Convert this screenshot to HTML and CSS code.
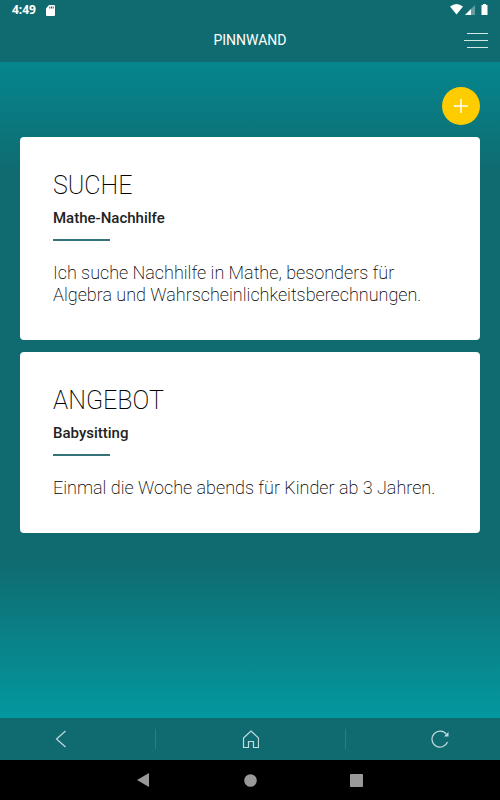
FILE: index.html
```html
<!DOCTYPE html>
<html lang="de">
<head>
<meta charset="utf-8">
<meta name="viewport" content="width=device-width, initial-scale=1">
<title>Pinnwand</title>
<link rel="stylesheet" href="styles.css">
</head>
<body>
<div class="app">
  <div class="status">
    <span class="time">4:49</span>
    <svg class="sd" width="10" height="11" viewBox="0 0 10 11"><path fill="#fff" fill-rule="evenodd" d="M3 0h5q1 0 1 1v9q0 1-1 1H1q-1 0-1-1V3.500zM3.300 1.500v2h1v-2zM5 1.500v2h1v-2zM6.700 1.500v2h1v-2z"/></svg>
    <svg class="signals" width="38" height="12" viewBox="0 0 38 12"><path fill="#fff" d="M0 2.500Q6.500-2.500 13 2.500L6.500 10.500z"/><path fill="#fff" opacity=".35" d="M25 1v10H15z"/><path fill="#fff" d="M21 5v6h-6z"/><path fill="#fff" d="M33 0h3v1h1.500v10h-6V1H33z"/></svg>
  </div>
  <header class="header">
    <h1 class="title">PINNWAND</h1>
    <button class="menu" type="button" aria-label="Menü">
      <svg width="24" height="16" viewBox="0 0 24 16" stroke="#d5e6e7" stroke-width="1"><path d="M3 1.500h21M0 8.500h24M3 15.500h21"/></svg>
    </button>
  </header>
  <main class="board">
    <button class="add" type="button" aria-label="Neuer Eintrag">
      <svg width="14" height="14" viewBox="0 0 14 14" stroke="#fff" stroke-width="1.500"><path d="M7 0v14M0 7h14"/></svg>
    </button>
    <article class="card">
      <h2 class="kind">SUCHE</h2>
      <h3 class="subject">Mathe-Nachhilfe</h3>
      <p class="text">Ich suche Nachhilfe in Mathe, besonders für Algebra und Wahrscheinlichkeitsberechnungen.</p>
    </article>
    <article class="card">
      <h2 class="kind">ANGEBOT</h2>
      <h3 class="subject">Babysitting</h3>
      <p class="text">Einmal die Woche abends für Kinder ab 3 Jahren.</p>
    </article>
  </main>
  <nav class="tabs">
    <button class="tab" type="button" aria-label="Zurück"><svg width="18" height="18" viewBox="0 0 18 18"><path d="M14.500 1L5.500 9l9 8"/></svg></button>
    <span class="divider"></span>
    <button class="tab" type="button" aria-label="Startseite"><svg width="18" height="18" viewBox="0 0 18 18"><path d="M2.500 8L10 1l7.500 7v9.500h-5v-6h-5v6h-5z"/></svg></button>
    <span class="divider"></span>
    <button class="tab" type="button" aria-label="Neu laden"><svg width="18" height="18" viewBox="0 0 18 18"><path d="M15.500 4.500A8 8 0 1 0 16.500 12"/><path class="tip" d="M17.500 2v4.500H13z"/></svg></button>
  </nav>
  <div class="system">
    <button class="key" type="button" aria-label="System zurück"><svg width="14" height="14" viewBox="0 0 14 14"><path d="M12 0v14L0 7z"/></svg></button>
    <button class="key" type="button" aria-label="System Start"><svg width="14" height="14" viewBox="0 0 14 14"><circle cx="7.500" cy="7.500" r="6.300"/></svg></button>
    <button class="key" type="button" aria-label="Übersicht"><svg width="14" height="14" viewBox="0 0 14 14"><rect x="1" y="1" width="13" height="13" rx="1"/></svg></button>
  </div>
</div>
</body>
</html>
```
FILE: styles.css
```css
* { box-sizing: border-box; }
body, h1, h2, h3, p { margin: 0; }
body { font-family: Roboto, "Liberation Sans", sans-serif; }
button { padding: 0; border: 0; background: none; font: inherit; cursor: pointer; }
svg { display: block; }
.app { display: flex; flex-direction: column; min-height: 100vh; background: #0f6b70; }
.status { display: flex; align-items: center; height: 20px; padding: 0 12px; color: #fff; }
.time { font-family: "Noto Sans", sans-serif; font-size: 12px; font-weight: 700; line-height: 20px; }
.sd { margin-left: 10px; }
.signals { margin-left: auto; }
.header { display: grid; grid-template-columns: 1fr auto 1fr; align-items: center; height: 42px; padding: 0 12px 2px; }
.title { grid-column: 2; color: #fff; font-size: 14px; font-weight: 400; line-height: 20px; }
.menu { justify-self: end; }
.board { display: flex; flex: 1; flex-direction: column; gap: 12px; padding: 25px 20px; background: linear-gradient(#05868e, #0f6b70 17%, #0f6b70 76%, #03989f); }
.add { display: grid; place-items: center; align-self: flex-end; width: 38px; height: 38px; border-radius: 50%; background: #fc0; }
.card { padding: 31px 33px 34px; border-radius: 4px; background: #fff; color: #000; }
.kind { font-size: 25px; font-weight: 200; line-height: 35px; }
.subject { color: #222; font-size: 15px; font-weight: 500; line-height: 30px; }
.subject::after { display: block; width: 57px; height: 2px; margin: 6px 0 21px; background: #33747b; content: ""; }
.text { font-size: 18px; font-weight: 200; line-height: 22px; }
.tabs { display: flex; justify-content: space-between; align-items: center; height: 42px; padding: 0 51px; }
.divider { width: 1px; height: 20px; background: #2c7d82; }
.tab svg { fill: none; stroke: #c3dcde; stroke-width: 1.2; }
.tab .tip { fill: #c3dcde; stroke: none; }
.system { display: flex; justify-content: center; align-items: center; gap: 92px; height: 40px; background: #000; }
.key svg { fill: #999; }
```
